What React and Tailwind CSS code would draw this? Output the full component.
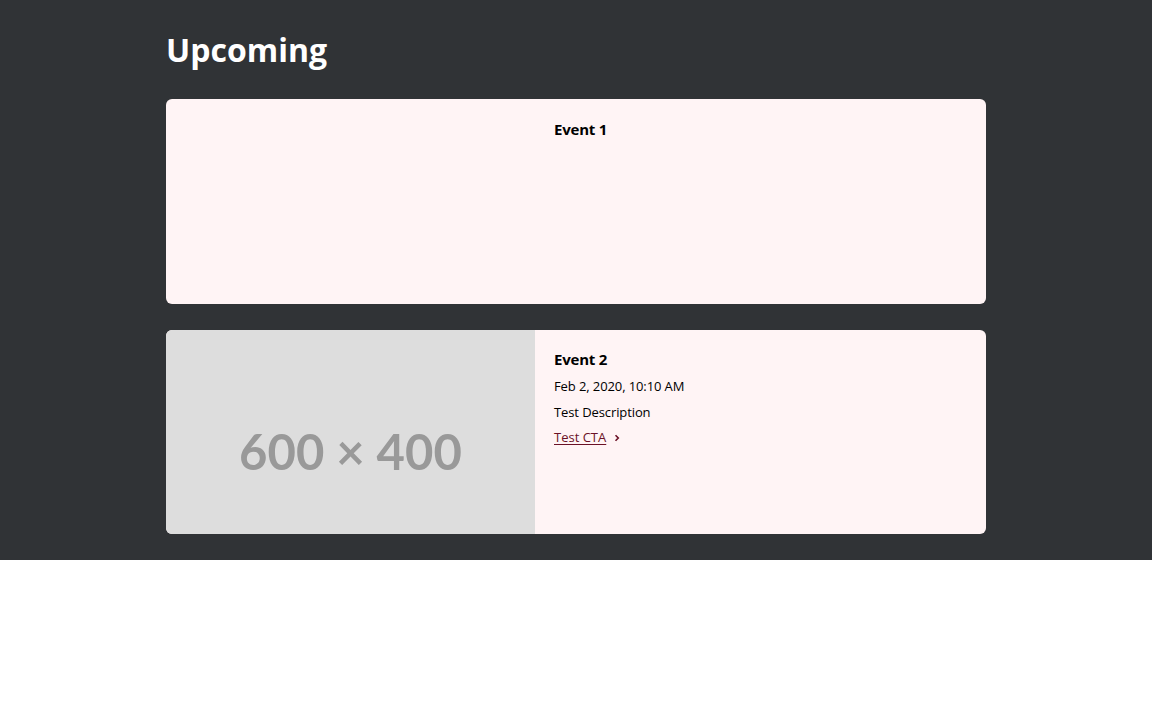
import React from 'react';

const events = [
  { title: 'Event 1' },
  {
    title: 'Event 2',
    image: true,
    date: 'Feb 2, 2020, 10:10 AM',
    description: 'Test Description',
    cta: 'Test CTA',
  },
];

const EventCard = ({ event }) => (
  <div className="flex h-[204.5px] overflow-hidden rounded-[6px] bg-[#fff4f5]">
    <div className="w-[369px] shrink-0 overflow-hidden">
      {event.image && (
        <div className="flex h-[246px] w-full items-center justify-center bg-[#dddddd]">
          <span className="-mt-[1px] font-['Lato',sans-serif] text-[49px] font-bold text-[#999999]">600 × 400</span>
        </div>
      )}
    </div>
    <div className="flex flex-col pl-[19px] pt-[19.5px] text-black">
      <h3 className="text-[15px] font-bold leading-[20px] tracking-[-0.2px]">{event.title}</h3>
      {event.date && <p className="mt-[8px] text-[13px] leading-[19px] tracking-[-0.1px]">{event.date}</p>}
      {event.description && <p className="mt-[7px] text-[13px] leading-[19px] tracking-[-0.1px]">{event.description}</p>}
      {event.cta && (
        <a href="#" className="mt-[6px] flex items-center gap-[8px] text-[13px] leading-[19px] text-[#6b1126]">
          <span className="underline underline-offset-2">{event.cta}</span>
          <svg width="6" height="8" viewBox="0 0 6 8" className="mt-[1px]">
            <path d="M1.5 1.2 L4.3 4 L1.5 6.8" fill="none" stroke="#6b1126" strokeWidth="1.6" />
          </svg>
        </a>
      )}
    </div>
  </div>
);

export default function App() {
  return (
    <div className="min-h-screen bg-white" style={{ fontFamily: '"Open Sans", sans-serif' }}>
      <section className="bg-[#303336] pb-[26px]">
        <div className="mx-auto w-[820px] pt-[28px]">
          <h1 className="text-[32px] font-bold leading-[44px] text-white">Upcoming</h1>
          <div className="mt-[27px] flex flex-col gap-[26px]">
            {events.map((e) => (
              <EventCard key={e.title} event={e} />
            ))}
          </div>
        </div>
      </section>
    </div>
  );
}
